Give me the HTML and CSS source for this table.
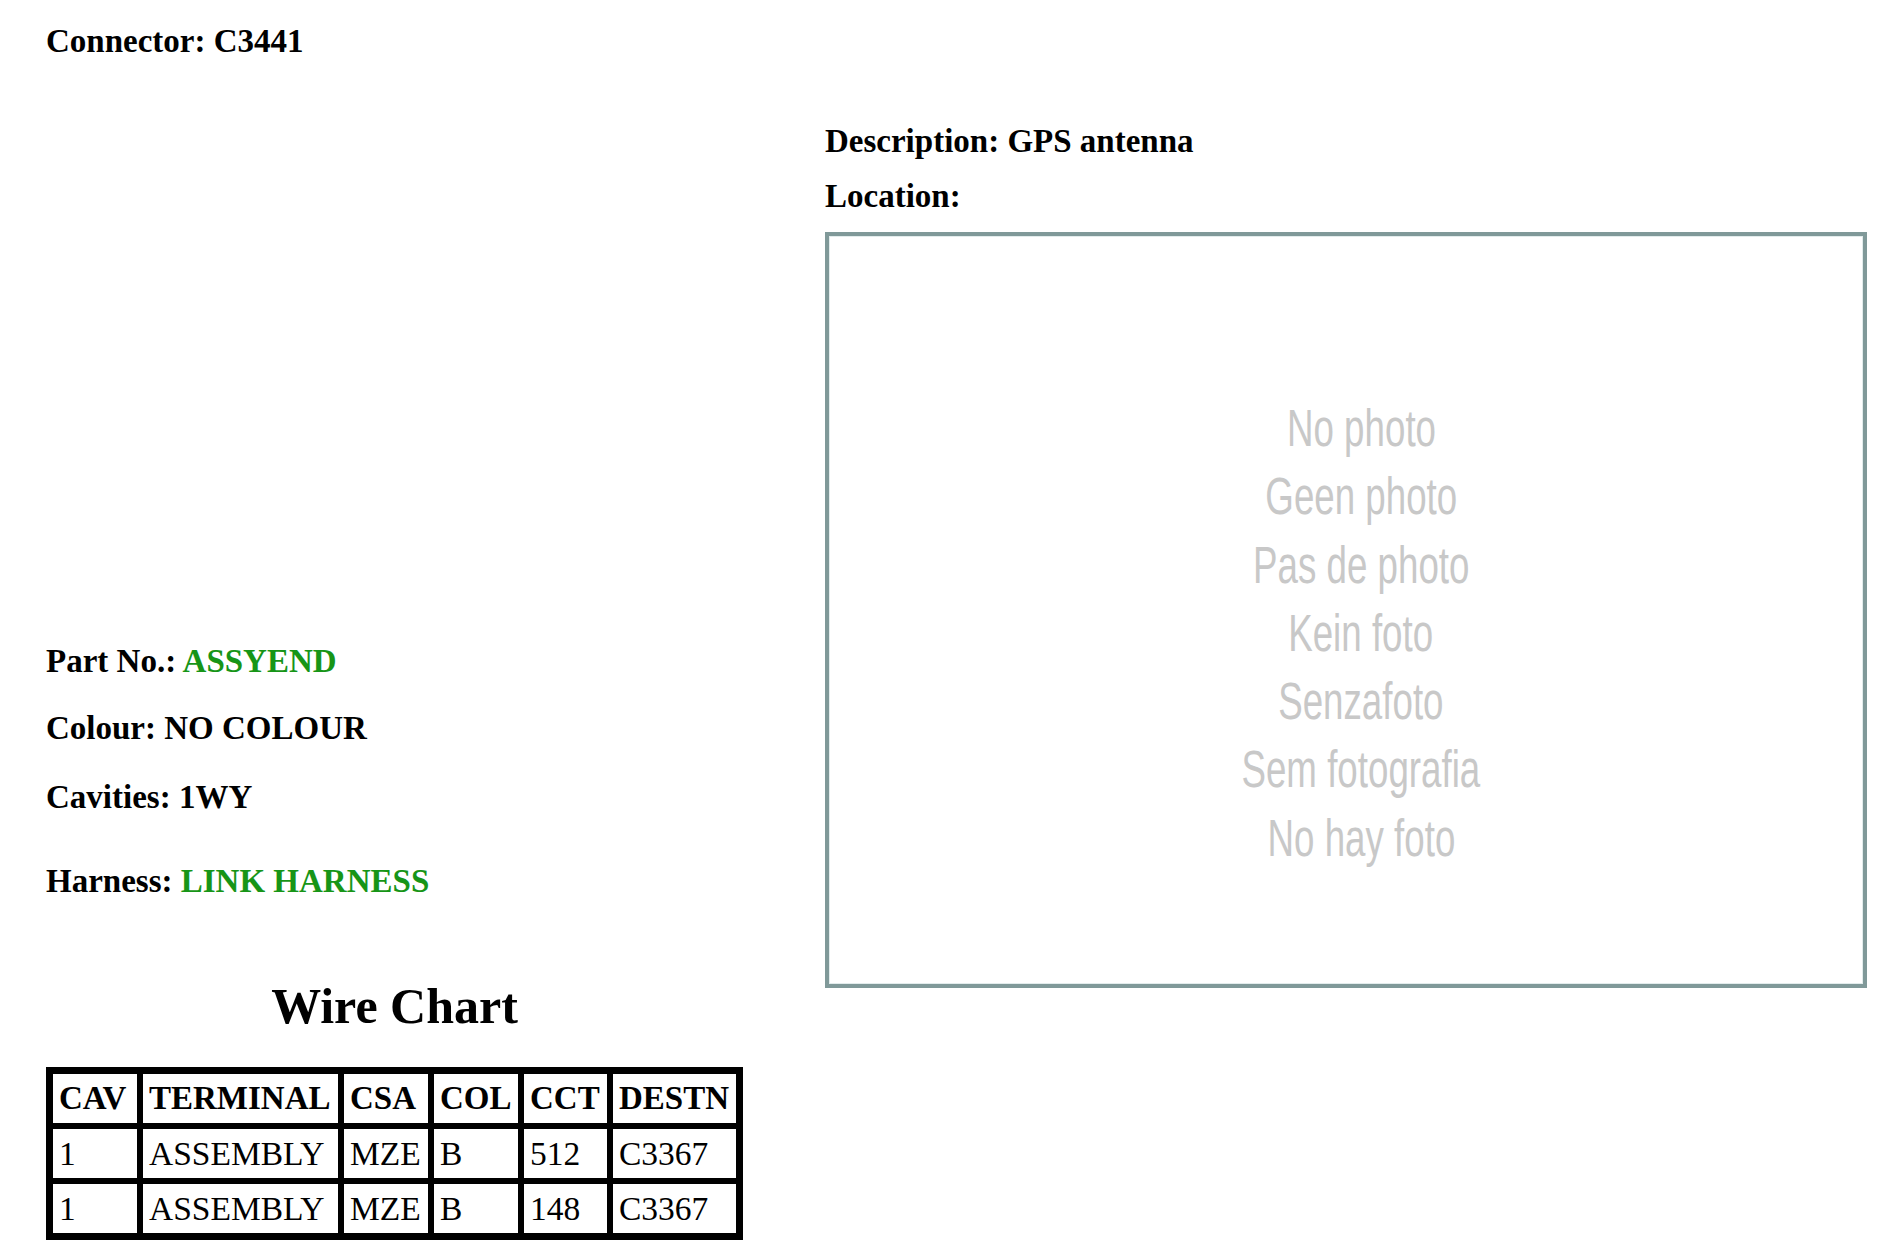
FILE: index.html
```html
<!DOCTYPE html>
<html>
<head>
<meta charset="utf-8">
<title>Connector C3441</title>
<link rel="stylesheet" href="styles.css">
</head>
<body>
<div class="page">
  <div class="left">
    <h1 class="field connector">Connector: C3441</h1>
    <p class="field part">Part No.: <span class="green">ASSYEND</span></p>
    <p class="field colour">Colour: NO COLOUR</p>
    <p class="field cavities">Cavities: 1WY</p>
    <p class="field harness">Harness: <span class="green">LINK HARNESS</span></p>
    <div class="chart">
      <h2 class="chart-title">Wire Chart</h2>
      <table class="wires">
        <colgroup>
          <col class="c-cav"><col class="c-term"><col class="c-csa"><col class="c-col"><col class="c-cct"><col class="c-dest">
        </colgroup>
        <tr><th>CAV</th><th>TERMINAL</th><th>CSA</th><th>COL</th><th>CCT</th><th>DESTN</th></tr>
        <tr><td>1</td><td>ASSEMBLY</td><td>MZE</td><td>B</td><td>512</td><td>C3367</td></tr>
        <tr><td>1</td><td>ASSEMBLY</td><td>MZE</td><td>B</td><td>148</td><td>C3367</td></tr>
      </table>
    </div>
  </div>
  <div class="right">
    <p class="field desc">Description: GPS antenna</p>
    <p class="field location">Location:</p>
    <div class="photo-box">
      <div class="nophoto">
        <span>No photo</span>
        <span>Geen photo</span>
        <span>Pas de photo</span>
        <span>Kein foto</span>
        <span>Senzafoto</span>
        <span>Sem fotografia</span>
        <span>No hay foto</span>
      </div>
    </div>
  </div>
</div>
</body>
</html>
```
FILE: styles.css
```css
html, body {
  margin: 0;
  padding: 0;
  background: #ffffff;
}

body {
  font-family: "Liberation Serif", "Times New Roman", serif;
  color: #000000;
}

.page {
  display: grid;
  grid-template-columns: 779px 1042px;
  padding-left: 46px;
  padding-top: 21px;
}

.left {
  display: flex;
  flex-direction: column;
  align-items: flex-start;
}

.field {
  margin: 0;
  font-size: 33px;
  font-weight: bold;
  line-height: 40px;
}

.green {
  color: #179517;
}

.part {
  margin-top: 580px;
}

.colour {
  margin-top: 27px;
}

.cavities {
  margin-top: 29px;
}

.harness {
  margin-top: 44px;
}

.chart {
  margin-top: 77px;
  display: flex;
  flex-direction: column;
  align-items: center;
}

.chart-title {
  margin: 0 0 33px 0;
  font-size: 50px;
  line-height: 56px;
  font-weight: bold;
  text-align: center;
}

.wires {
  background: #000000;
  border: 1px solid #000000;
  border-spacing: 6px;
}

.wires th,
.wires td {
  background: #ffffff;
  height: 49px;
  line-height: 49px;
  padding: 0 0 0 6px;
  text-align: left;
  white-space: nowrap;
  box-sizing: border-box;
}

.wires th {
  font-weight: bold;
  font-size: 33px;
}

.wires td {
  font-weight: normal;
  font-size: 33.5px;
}

.c-cav { width: 84px; }
.c-term { width: 195px; }
.c-csa { width: 84px; }
.c-col { width: 84px; }
.c-cct { width: 83px; }
.c-dest { width: 123px; }

.right {
  display: flex;
  flex-direction: column;
}

.desc {
  margin-top: 100px;
}

.location {
  margin-top: 15px;
}

.photo-box {
  margin-top: 16px;
  width: 1042px;
  height: 756px;
  box-sizing: border-box;
  border: 4px solid #809999;
  box-shadow: inset 0 0 0 1px #e2ecec;
  display: flex;
  justify-content: center;
  align-items: flex-start;
}

.nophoto {
  display: flex;
  flex-direction: column;
  align-items: center;
  padding-top: 159px;
  padding-left: 30px;
  font-family: "Liberation Sans", Arial, sans-serif;
  font-size: 51px;
  line-height: 68.3px;
  color: #c8c8c8;
}

.nophoto span {
  display: block;
  transform: scaleX(0.72);
  white-space: nowrap;
}
```
